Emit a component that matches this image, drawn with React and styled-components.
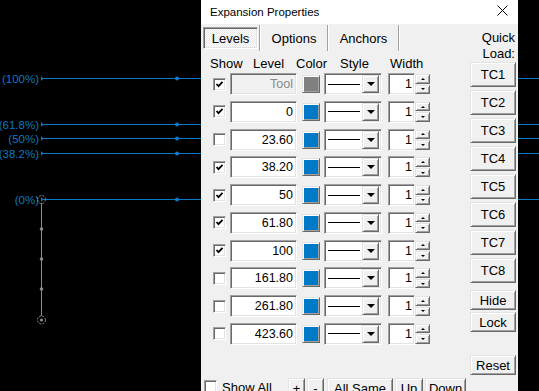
import styled, { createGlobalStyle, css } from "styled-components";

const GlobalStyle = createGlobalStyle`
  html, body {
    margin: 0;
    padding: 0;
    background: #000;
  }
  body {
    width: 539px;
    height: 391px;
    overflow: hidden;
    font-family: "Liberation Sans", Arial, sans-serif;
  }
`;

const BLUE = "#0a79c6";
const GRAY = "#8c8c8c";

const chartLines = [
  { y: 78, label: "(100%)" },
  { y: 124, label: "(61.8%)" },
  { y: 138, label: "(50%)" },
  { y: 153, label: "(38.2%)" },
  { y: 199, label: "(0%)" },
];

const levels = [
  { value: "Tool", show: true, color: "#808080", tool: true },
  { value: "0", show: true },
  { value: "23.60", show: false },
  { value: "38.20", show: true },
  { value: "50", show: true },
  { value: "61.80", show: true },
  { value: "100", show: true },
  { value: "161.80", show: false },
  { value: "261.80", show: false },
  { value: "423.60", show: false },
];

const sunken = css`
  border: 1px solid;
  border-color: #a0a0a0 #fff #fff #a0a0a0;
  box-shadow: inset 1px 1px 0 #696969, inset -1px -1px 0 #e3e3e3;
`;

const raised = css`
  border: 1px solid;
  border-color: #e3e3e3 #696969 #696969 #e3e3e3;
  box-shadow: inset 1px 1px 0 #fff, inset -1px -1px 0 #a0a0a0;
`;

export default function App() {
  return (
    <>
      <GlobalStyle />
      <Desktop>
        <Chart />
        <Dialog>
          <TitleBar>
            <Title>Expansion Properties</Title>
            <CloseIcon width="11" height="11" viewBox="0 0 11 11">
              <path d="M0.5 0.5 L10.5 10.5 M10.5 0.5 L0.5 10.5" stroke="#000" strokeWidth="1" />
            </CloseIcon>
          </TitleBar>
          <Body>
            <Main>
              <Tabs>
                <Tab $active $w={55}>Levels</Tab>
                <TabSep />
                <Tab $w={66}>Options</Tab>
                <TabSep />
                <Tab $w={69}>Anchors</Tab>
                <TabSep />
              </Tabs>
              <Header>
                <HeaderCell $w={43}>Show</HeaderCell>
                <HeaderCell $w={43}>Level</HeaderCell>
                <HeaderCell $w={44}>Color</HeaderCell>
                <HeaderCell $w={50}>Style</HeaderCell>
                <HeaderCell>Width</HeaderCell>
              </Header>
              <Rows>
                {levels.map((l) => (
                  <Row key={l.value}>
                    <CheckBox checked={l.show} />
                    <LevelField $disabled={l.tool}>{l.value}</LevelField>
                    <Swatch $color={l.color || "#007ac6"} />
                    <StyleSelect>
                      <LineSample />
                      <DropButton>
                        <DownArrow />
                      </DropButton>
                    </StyleSelect>
                    <Spinner>
                      <SpinValue>1</SpinValue>
                      <SpinButtons>
                        <SpinButton>
                          <SmallArrow $up />
                        </SpinButton>
                        <SpinButton>
                          <SmallArrow />
                        </SpinButton>
                      </SpinButtons>
                    </Spinner>
                  </Row>
                ))}
              </Rows>
            </Main>
            <Side>
              <QuickLabel>
                Quick
                <br />
                Load:
              </QuickLabel>
              <ButtonStack $gap={3}>
                {[1, 2, 3, 4, 5, 6, 7, 8].map((n) => (
                  <SideButton key={n} $h={25}>
                    TC{n}
                  </SideButton>
                ))}
              </ButtonStack>
              <ButtonStack $gap={2} $top={7}>
                <SideButton $h={20}>Hide</SideButton>
                <SideButton $h={20}>Lock</SideButton>
              </ButtonStack>
              <ButtonStack $top={23}>
                <SideButton $h={20}>Reset</SideButton>
              </ButtonStack>
            </Side>
          </Body>
          <Footer>
            <CheckBox checked={false} $top={2} />
            <FooterLabel>Show All</FooterLabel>
            <SmallButton $w={17}>+</SmallButton>
            <SmallButton $w={17} $ml={2}>-</SmallButton>
            <SmallButton $w={66} $ml={3}>All Same</SmallButton>
            <SmallButton $w={28} $ml={2}>Up</SmallButton>
            <SmallButton $w={41} $ml={2}>Down</SmallButton>
          </Footer>
        </Dialog>
      </Desktop>
    </>
  );
}

function Chart() {
  return (
    <ChartSvg width="539" height="391" viewBox="0 0 539 391">
      {chartLines.map((l) => (
        <g key={l.label}>
          <text
            x="39"
            y={l.y + 4.5}
            textAnchor="end"
            fill={BLUE}
            fontSize="11.5"
            fontFamily="Liberation Sans, Arial, sans-serif"
          >
            {l.label}
          </text>
          <line x1="41" x2="539" y1={l.y + 0.5} y2={l.y + 0.5} stroke={BLUE} strokeWidth="1.2" />
          <path d={`M41 ${l.y - 2} v5 l2.5 -2.5 z`} fill={BLUE} />
          <circle cx="177" cy={l.y + 0.5} r="2" fill={BLUE} />
        </g>
      ))}
      <line x1="41.5" x2="41.5" y1="203" y2="316" stroke={GRAY} strokeWidth="1" />
      {[229, 259, 289].map((y) => (
        <circle key={y} cx="41.5" cy={y} r="1.8" fill={GRAY} />
      ))}
      <circle cx="41.5" cy="199.5" r="4" fill="none" stroke={GRAY} strokeDasharray="2 1.2" />
      <circle cx="41.5" cy="320" r="4" fill="none" stroke={GRAY} strokeDasharray="2 1.2" />
      <circle cx="41.5" cy="320" r="1.6" fill={GRAY} />
    </ChartSvg>
  );
}

function CheckBox({ checked, $top }) {
  return (
    <Box $top={$top}>
      {checked && (
        <svg width="9" height="9" viewBox="0 0 9 9">
          <path d="M1.5 4 L3.5 6.2 L7.5 1.8" fill="none" stroke="#000" strokeWidth="1.8" />
        </svg>
      )}
    </Box>
  );
}

const Desktop = styled.div`
  position: relative;
  width: 539px;
  height: 391px;
  overflow: hidden;
  background: #000;
`;

const ChartSvg = styled.svg`
  position: absolute;
  left: 0;
  top: 0;
`;

const Dialog = styled.div`
  position: absolute;
  left: 201px;
  top: 0;
  width: 317px;
  height: 391px;
  overflow: hidden;
  display: flex;
  flex-direction: column;
  background: #f0f0f0;
  color: #000;
  font-size: 13px;
`;

const TitleBar = styled.div`
  flex: none;
  display: flex;
  justify-content: space-between;
  align-items: flex-start;
  height: 24px;
  padding: 0 10px 0 9px;
  background: #fff;
`;

const Title = styled.span`
  margin-top: 5px;
  font-size: 11.5px;
  line-height: 14px;
`;

const CloseIcon = styled.svg`
  margin-top: 5px;
`;

const Body = styled.div`
  flex: none;
  display: flex;
  padding: 0 2px;
`;

const Main = styled.div`
  display: flex;
  flex-direction: column;
  width: 230px;
`;

const Tabs = styled.div`
  display: flex;
  align-items: center;
  height: 26px;
  margin-top: 1px;
`;

const Tab = styled.div`
  display: flex;
  align-items: center;
  justify-content: center;
  width: ${(p) => p.$w}px;
  height: 22px;
  box-sizing: border-box;
  font-size: 13px;
  color: #000;
  ${(p) =>
    p.$active &&
    css`
      margin-right: 1px;
      ${sunken};
      background: repeating-conic-gradient(#fff 0 25%, #e6e6e6 0 50%) 0 0 / 2px 2px;
    `}
`;

const TabSep = styled.div`
  width: 1px;
  height: 26px;
  background: #a0a0a0;
  border-right: 1px solid #fff;
`;

const Header = styled.div`
  display: flex;
  height: 16px;
  line-height: 16px;
  margin: 5px 0 1px;
  padding-left: 7px;
  font-size: 13px;
`;

const HeaderCell = styled.span`
  width: ${(p) => (p.$w ? `${p.$w}px` : "auto")};
  flex: none;
`;

const Rows = styled.div`
  display: flex;
  flex-direction: column;
  gap: 5.75px;
`;

const Row = styled.div`
  display: grid;
  grid-template-columns: 17px 72px 22px 64px 43px;
  align-items: center;
  height: 22px;
  padding-left: 10px;
`;

const Box = styled.div`
  display: flex;
  align-items: center;
  justify-content: center;
  width: 13px;
  height: 13px;
  box-sizing: border-box;
  margin-top: ${(p) => p.$top || 0}px;
  background: #fff;
  ${sunken};
`;

const LevelField = styled.div`
  width: 67px;
  height: 22px;
  box-sizing: border-box;
  padding-right: 3px;
  text-align: right;
  font-size: 12.5px;
  line-height: 20px;
  ${sunken};
  background: ${(p) => (p.$disabled ? "#f0f0f0" : "#fff")};
  color: ${(p) => (p.$disabled ? "#8a8a8a" : "#000")};
`;

const Swatch = styled.div`
  width: 18px;
  height: 18px;
  box-sizing: border-box;
  ${raised};
  background: ${(p) => p.$color};
`;

const StyleSelect = styled.div`
  display: flex;
  align-items: center;
  width: 58px;
  height: 22px;
  box-sizing: border-box;
  padding: 2px 2px 2px 3px;
  background: #fff;
  ${sunken};
`;

const LineSample = styled.div`
  flex: 1;
  height: 1px;
  margin-right: 2px;
  background: #000;
`;

const DropButton = styled.div`
  display: flex;
  align-items: center;
  justify-content: center;
  width: 17px;
  height: 18px;
  box-sizing: border-box;
  background: #f0f0f0;
  ${raised};
`;

const DownArrow = styled.div`
  width: 0;
  height: 0;
  border-left: 4px solid transparent;
  border-right: 4px solid transparent;
  border-top: 4px solid #000;
`;

const Spinner = styled.div`
  display: flex;
  width: 43px;
  height: 22px;
`;

const SpinValue = styled.div`
  width: 27px;
  height: 22px;
  box-sizing: border-box;
  padding-right: 2px;
  text-align: right;
  font-size: 12.5px;
  line-height: 20px;
  background: #fff;
  ${sunken};
`;

const SpinButtons = styled.div`
  display: flex;
  flex-direction: column;
  gap: 1px;
  width: 15px;
  padding: 1px 0;
  box-sizing: border-box;
`;

const SpinButton = styled.div`
  display: flex;
  align-items: center;
  justify-content: center;
  flex: 1;
  box-sizing: border-box;
  background: #f0f0f0;
  ${raised};
`;

const SmallArrow = styled.div`
  width: 0;
  height: 0;
  border-left: 2px solid transparent;
  border-right: 2px solid transparent;
  ${(p) => (p.$up ? "border-bottom: 2px solid #000;" : "border-top: 2px solid #000;")}
`;

const Side = styled.div`
  display: flex;
  flex-direction: column;
  width: 46px;
  margin-left: auto;
`;

const QuickLabel = styled.div`
  margin-top: 6px;
  text-align: right;
  font-size: 13px;
  line-height: 16px;
  margin-right: 1px;
`;

const ButtonStack = styled.div`
  display: flex;
  flex-direction: column;
  gap: ${(p) => p.$gap || 0}px;
  margin-top: ${(p) => p.$top || 0}px;
`;

const buttonBase = css`
  display: flex;
  align-items: center;
  justify-content: center;
  padding: 0;
  box-sizing: border-box;
  background: #f0f0f0;
  font-family: "Liberation Sans", Arial, sans-serif;
  font-size: 13px;
  color: #000;
  ${raised};
`;

const SideButton = styled.button`
  ${buttonBase};
  width: 46px;
  height: ${(p) => p.$h}px;
`;

const Footer = styled.div`
  flex: none;
  display: flex;
  align-items: flex-start;
  margin-top: 3px;
  padding-left: 3px;
`;

const FooterLabel = styled.span`
  width: 66px;
  margin-left: 5px;
  font-size: 13px;
  line-height: 16px;
  margin-top: 2px;
`;

const SmallButton = styled.button`
  ${buttonBase};
  width: ${(p) => p.$w}px;
  height: 22px;
  margin-left: ${(p) => p.$ml || 0}px;
  align-items: flex-start;
  padding-top: 2px;
`;
